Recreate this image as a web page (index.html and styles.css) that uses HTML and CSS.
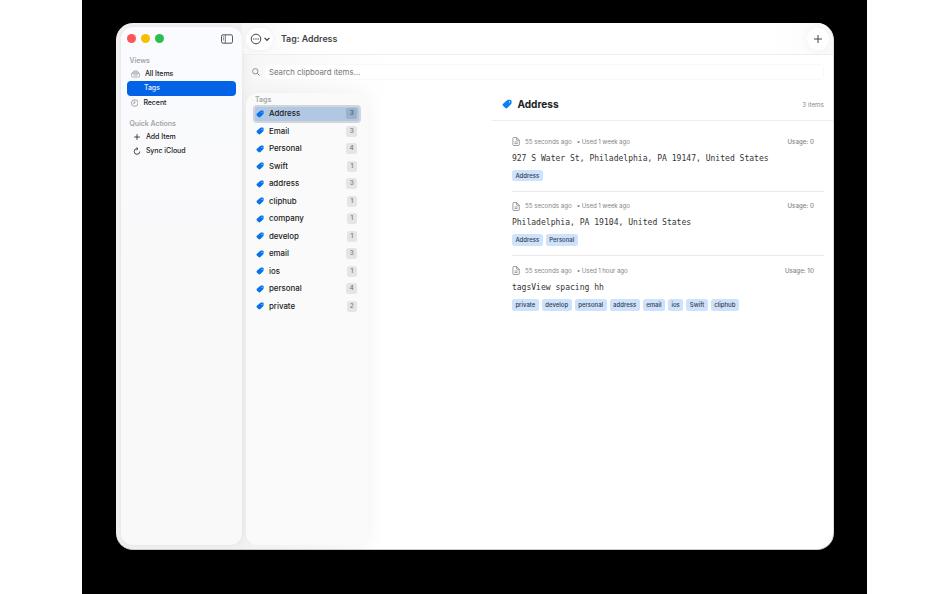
FILE: index.html
```
<!DOCTYPE html>
<html lang="en">
<head>
<meta charset="utf-8">
<title>Tag: Address</title>
<link rel="stylesheet" href="styles.css">
</head>
<body>
<svg width="0" height="0" class="defs">
  <symbol id="tag" viewBox="0 0 16 16"><path fill-rule="evenodd" d="M7.600 2.400 Q8.900 1.200 10.500 1.200 L12.800 1.200 Q15.300 1.200 15.300 3.700 L15.300 6 Q15.300 7.600 14 8.900 L8.800 14 Q6.800 15.700 4.900 13.900 L1.700 10.800 Q0 9 1.800 7.600 Z M12 3.700 A1 1 0 1 0 12 5.700 A1 1 0 1 0 12 3.700 Z" fill="currentColor"/></symbol>
  <symbol id="doc" viewBox="0 0 8 9"><path d="M1.700 .5H4.600L7.300 3.200V7.700Q7.300 8.500 6.500 8.500H1.700Q.9 8.500 .9 7.700V1.300Q.9 .5 1.700 .5Z M4.600 .5V3.200H7.300 M2.500 5H5.700 M2.500 6.600H5.700" fill="none" stroke="currentColor" stroke-width=".7" stroke-linejoin="round"/></symbol>
</svg>
<div class="desktop">
  <div class="window">
    <aside class="sidebar">
      <div class="controls">
        <i class="light red"></i><i class="light yellow"></i><i class="light green"></i>
        <svg class="panel-icon" viewBox="0 0 12 10"><rect x=".5" y=".8" width="11" height="8.400" rx="1.500" fill="none" stroke="currentColor"/><path d="M4.300 1V9M1.900 2.800H3M1.900 4.300H3M1.900 5.800H3" stroke="currentColor" stroke-width=".8"/></svg>
      </div>
      <h3>Views</h3>
      <div class="nav"><svg viewBox="0 0 10 8"><path d="M1.200 3.200H8.800Q9.500 3.200 9.500 4V6.500Q9.500 7.400 8.600 7.400H1.400Q.5 7.400 .5 6.500V4Q.5 3.200 1.200 3.200ZM1.300 3Q1.500 1.900 2.400 1.900H7.600Q8.500 1.900 8.700 3M2.700 1.700Q3 .6 4 .6H6Q7 .6 7.300 1.700M3.200 3.500V5.300H6.800V3.500" fill="none" stroke="currentColor" stroke-width=".6"/></svg><span class="all">All Items</span></div>
      <div class="nav active"><span>Tags</span></div>
      <div class="nav recent"><svg viewBox="0 0 8 8"><circle cx="4" cy="4" r="3.500" fill="none" stroke="currentColor" stroke-width=".7"/><path d="M4 1.700V4.200H2.200" fill="none" stroke="currentColor" stroke-width=".7"/></svg><span>Recent</span></div>
      <h3 class="second">Quick Actions</h3>
      <div class="nav action"><svg viewBox="0 0 8 8"><path d="M4 1.200V6.800M1.200 4H6.800" stroke="currentColor" stroke-width=".9"/></svg><span>Add Item</span></div>
      <div class="nav action"><svg viewBox="0 0 8 8"><path d="M4.700 1.700H4A2.800 2.800 0 1 0 6.800 4.500M3.500 .3L5 1.700L3.500 3.100" fill="none" stroke="currentColor" stroke-width=".9"/></svg><span>Sync iCloud</span></div>
    </aside>
    <main>
      <header class="toolbar">
        <div class="more"><svg viewBox="0 0 20 12"><circle cx="6" cy="6" r="4.800" fill="none" stroke="currentColor"/><circle cx="3.800" cy="6" r=".65"/><circle cx="6" cy="6" r=".65"/><circle cx="8.200" cy="6" r=".65"/><path d="M14.500 4.900L17 7.300L19.500 4.900" fill="none" stroke="currentColor" stroke-width="1.200"/></svg></div>
        <h1>Tag: Address</h1>
        <div class="plus"><svg viewBox="0 0 10 10"><path d="M5 1V9M1 5H9" stroke="currentColor"/></svg></div>
      </header>
      <div class="search">
        <svg viewBox="0 0 8 8"><circle cx="3.300" cy="3.300" r="2.700" fill="none" stroke="currentColor" stroke-width=".8"/><path d="M5.300 5.300L7.600 7.600" stroke="currentColor" stroke-width=".9"/></svg>
        <div class="field">Search clipboard items...</div>
      </div>
      <div class="body">
        <section class="taglist">
          <h3>Tags</h3>
          <div class="row selected"><svg><use href="#tag"/></svg><span>Address</span><b>3</b></div>
          <div class="row"><svg><use href="#tag"/></svg><span>Email</span><b>3</b></div>
          <div class="row"><svg><use href="#tag"/></svg><span>Personal</span><b>4</b></div>
          <div class="row"><svg><use href="#tag"/></svg><span>Swift</span><b>1</b></div>
          <div class="row"><svg><use href="#tag"/></svg><span>address</span><b>3</b></div>
          <div class="row"><svg><use href="#tag"/></svg><span>cliphub</span><b>1</b></div>
          <div class="row"><svg><use href="#tag"/></svg><span>company</span><b>1</b></div>
          <div class="row"><svg><use href="#tag"/></svg><span>develop</span><b>1</b></div>
          <div class="row"><svg><use href="#tag"/></svg><span>email</span><b>3</b></div>
          <div class="row"><svg><use href="#tag"/></svg><span>ios</span><b>1</b></div>
          <div class="row"><svg><use href="#tag"/></svg><span>personal</span><b>4</b></div>
          <div class="row"><svg><use href="#tag"/></svg><span>private</span><b>2</b></div>
        </section>
        <section class="detail">
          <div class="heading"><svg><use href="#tag"/></svg><h2>Address</h2><span>3 items</span></div>
          <article>
            <div class="meta"><svg><use href="#doc"/></svg><span class="age">55 seconds ago</span><span class="used">• Used 1 week ago</span><span class="usage">Usage: 0</span></div>
            <p>927 S Water St, Philadelphia, PA 19147, United States</p>
            <div class="chips"><span>Address</span></div>
          </article>
          <article>
            <div class="meta"><svg><use href="#doc"/></svg><span class="age">55 seconds ago</span><span class="used">• Used 1 week ago</span><span class="usage">Usage: 0</span></div>
            <p>Philadelphia, PA 19104, United States</p>
            <div class="chips"><span>Address</span><span>Personal</span></div>
          </article>
          <article>
            <div class="meta"><svg><use href="#doc"/></svg><span class="age">55 seconds ago</span><span class="used">• Used 1 hour ago</span><span class="usage">Usage: 10</span></div>
            <p>tagsView spacing hh</p>
            <div class="chips"><span>private</span><span>develop</span><span>personal</span><span>address</span><span>email</span><span>ios</span><span>Swift</span><span>cliphub</span></div>
          </article>
        </section>
      </div>
    </main>
  </div>
</div>
</body>
</html>
```
FILE: styles.css
```
* { box-sizing: border-box; }
body { margin: 0; background: #fff; font-family: Inter, sans-serif; color: #222; overflow: hidden; }
h1, h2, h3, p { margin: 0; }
svg { display: block; flex: none; }
.defs { position: absolute; }
.desktop { width: 785px; height: 594px; margin-left: 82.400px; padding: 23px 33.500px 0; background: #000; }
.window { width: 718px; height: 526.500px; display: flex; padding: 4px 0 4px 5px; border-radius: 17px; overflow: hidden; background: linear-gradient(90deg, #f0f0f1 0, #f0f0f1 124px, #f7f7f7 138px, #fbfbfb 200px, #fff 275px); border-right: 1px solid #ddd; border-bottom: 1px solid #ccc; }
.sidebar { width: 121px; flex: none; padding: 7px 6px 0; border-radius: 12px; background: linear-gradient(#fafbff, #f9f9fa 45%, #f9f9f9); box-shadow: 0 0 4px #0000000f; z-index: 1; }
.controls { display: flex; align-items: center; height: 9px; gap: 5px; padding-left: .5px; }
.light { width: 9px; height: 9px; border-radius: 50%; }
.red { background: #fb5558; } .yellow { background: #f9bd05; } .green { background: #2dbe50; }
.panel-icon { width: 12px; height: 10px; margin-left: auto; margin-right: 3px; color: #555; }
h3 { font-size: 7px; line-height: 9px; font-weight: 600; color: #a5a6a9; }
.sidebar h3 { margin: 13px 0 1.500px 2.500px; letter-spacing: -.05px; }
.nav { height: 14.500px; display: flex; align-items: center; font-size: 7px; line-height: 10px; font-weight: 500; color: #222; border-radius: 4px; padding-left: 4px; letter-spacing: -.04px; }
.nav svg { width: 9px; height: 8px; color: #777; }
.nav span { margin-left: 5px; }
.nav.active { background: #0263e6; color: #e6f0ff; padding-left: 12px; width: 109px; }
.nav.recent svg { width: 7.500px; }
.sidebar .recent span { margin-left: 5px; }
.sidebar h3.second { margin-top: 8.500px; margin-bottom: 2px; }
.nav.action { padding-left: 6px; }
.nav.action svg { width: 8px; color: #333; }
main { flex: 1; min-width: 0; display: flex; flex-direction: column; margin-top: -4px; }
.toolbar { height: 32px; flex: none; display: flex; align-items: center; padding: 0 4px; border-bottom: 1px solid #eee; background: linear-gradient(90deg, #f7f7f7, #fff 60px, #fff 530px, #fafafa); }
.more { width: 27px; height: 22px; border-radius: 11px; background: #fff; box-shadow: 0 0 6px #0000000d; padding: 5px 0 0 4px; }
.more svg { width: 20px; height: 12px; color: #444; fill: #444; }
h1 { font-size: 8.850px; line-height: 12px; font-weight: 600; color: #444; margin-left: 8px; }
.plus { width: 22px; height: 22px; border-radius: 50%; background: #fff; box-shadow: 0 0 10px #0000000d; margin-left: auto; padding: 6px; color: #444; }
.search { display: flex; align-items: center; height: 33px; flex: none; padding: 0 9px 0 10px; }
.search svg { width: 8px; height: 8px; color: #777; }
.field { flex: 1; height: 16px; margin-left: 4px; padding-left: 4px; border: 1px solid #f8f8f8; border-radius: 4px; background: #ffffffb0; color: #777; font-size: 7.800px; line-height: 14px; }
.body { flex: 1; display: flex; min-height: 0; padding-left: 4px; margin-top: 4.500px; }
.taglist { width: 122px; flex: none; border-radius: 12px; background: #fafafa; box-shadow: 0 0 18px #0000000d; padding: 2px 7px 0; }
.taglist h3 { margin: 0 0 1.500px 2px; }
.row { height: 17.500px; display: flex; align-items: center; padding: 0 4px 0 3px; font-size: 7.900px; line-height: 11px; font-weight: 500; color: #222; }
.row svg { width: 8px; height: 8px; color: #0872ee; }
.row span { margin-left: 5px; }
.row b { margin-left: auto; min-width: 10px; height: 11px; padding: 0 3.200px; border-radius: 2.500px; background: #e5e5e5; color: #777; font-size: 6.500px; line-height: 11px; font-weight: 500; text-align: center; }
.selected { background: #b1c8e4; border: 2px solid #d2d5da; border-radius: 4px; padding: 0 2px 0 1px; }
.selected b { background: #9bb0c9; color: #455a73; }
.detail { flex: 1; min-width: 0; padding-left: 124px; padding-top: 2px; }
.heading { height: 26px; border-bottom: 1px solid #ededed; display: flex; align-items: flex-start; padding: 3px 9px 0 10px; }
.heading svg { width: 10px; height: 10px; color: #0a80f8; margin-top: 1.500px; }
h2 { font-size: 10.100px; line-height: 14px; font-weight: 700; margin-left: 5.500px; margin-top: -.5px; }
.heading span { margin-left: auto; font-size: 6.250px; line-height: 14px; color: #888; }
article { margin: 0 9px 0 20px; height: 64.600px; padding-top: 9.500px; border-bottom: 1.500px solid #e9e9e9; }
article:nth-of-type(1) { height: 71px; padding-top: 16px; }
article:last-child { border: 0; }
.meta { height: 10px; display: flex; align-items: center; font-size: 6.200px; line-height: 10px; color: #858585; }
.meta svg { width: 8px; height: 9px; color: #777; margin-right: 5px; }
.age { margin-right: 5px; }
.used { letter-spacing: -.1px; }
.usage { margin-left: auto; margin-right: 10px; font-weight: 500; }
p { font: 8.050px/14px "DejaVu Sans Mono", monospace; color: #333; margin-top: 5.300px; white-space: nowrap; }
.chips { display: flex; gap: 3px; margin-top: 4.200px; }
.chips span { height: 11.500px; padding: 0 3.500px; border-radius: 2.500px; background: #cfe2fb; color: #2f3d4f; font-size: 6px; line-height: 11.500px; font-weight: 500; }
```
